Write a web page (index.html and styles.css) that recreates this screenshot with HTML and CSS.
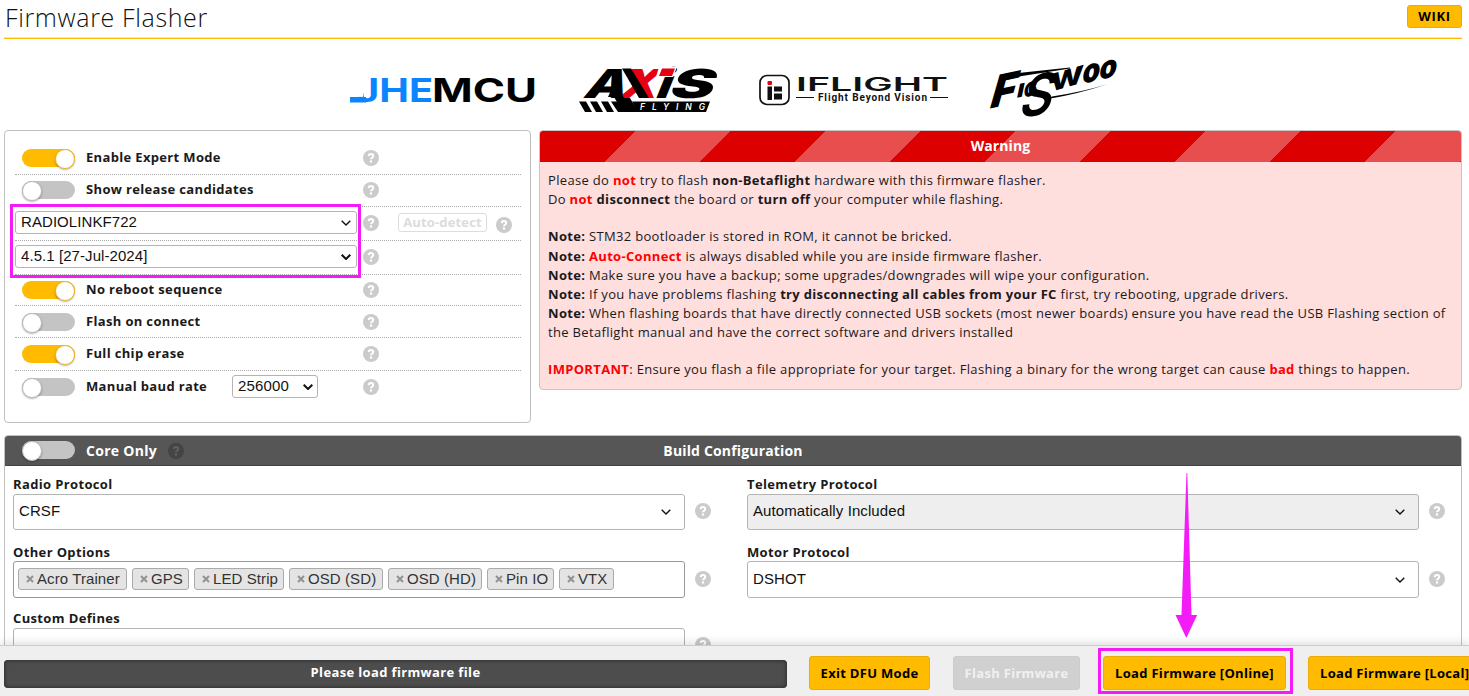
FILE: index.html
```html
<!DOCTYPE html>
<html lang="en">
<head>
<meta charset="utf-8">
<title>Firmware Flasher</title>
<link rel="stylesheet" href="styles.css">
</head>
<body>
<svg class="defs" width="0" height="0">
  <symbol id="help" viewBox="0 0 16 16"><circle cx="8" cy="8" r="8" fill="currentColor"/><path d="M5.7 6.1C5.8 3.4 10.2 3.4 10.2 6.1C10.2 7.7 8.1 7.7 8 9.3" fill="none" stroke="var(--mark)" stroke-width="2"/><rect x="6.9" y="10.4" width="2.2" height="2.2" fill="var(--mark)"/></symbol>
  <symbol id="chev" viewBox="0 0 10 6"><path d="M.7.7 5 5 9.3.7" fill="none" stroke="currentColor" stroke-width="var(--sw)"/></symbol>
  <symbol id="cross" viewBox="0 0 8 8"><path d="M1 1 7 7M7 1 1 7" fill="none" stroke="#929292" stroke-width="2"/></symbol>
</svg>

<header class="top">
  <h1>Firmware Flasher</h1>
  <a class="btn wiki">WIKI</a>
</header>

<div class="sponsors">
  <svg class="logo-jhemcu" width="190" height="40" viewBox="348 70 190 40">
    <path d="M350 97H366V102.500H350Z" fill="#0a84ff"/>
    <g font-family="Inter, sans-serif" font-weight="700" font-size="32"><text x="356" y="102" textLength="77" lengthAdjust="spacingAndGlyphs" fill="#0a84ff">JHE</text><text x="432" y="102" textLength="105" lengthAdjust="spacingAndGlyphs" fill="#000">MCU</text></g>
    <path d="M350 92H363V96.900H350Z" fill="#fff"/>
  </svg>
  <svg class="logo-axis" width="140" height="48" viewBox="578 66 140 48">
    <g transform="translate(0 98) skewX(-22)" font-family="Inter, sans-serif" font-weight="900" font-size="40"><text x="582" y="0" textLength="42" lengthAdjust="spacingAndGlyphs">A</text><text x="617" y="0" textLength="38" lengthAdjust="spacingAndGlyphs" fill="#e60012">X</text><text x="654" y="0" textLength="14" lengthAdjust="spacingAndGlyphs">i</text><text x="667" y="0" textLength="44" lengthAdjust="spacingAndGlyphs">S</text></g>
    <path d="M659 67H677L673 77H656Z" fill="#fff"/>
    <path d="M662 68.500H675L672 76H659Z" fill="#e60012"/>
    <path d="M622 68.500H631L649 98H639Z"/>
    <path d="M612 88H619L624 98H630L638 112H623L614 97H608Z"/>
    <path d="M579 101.500H586L592 112H585ZM590 101.500H597L603 112H596ZM601 101.500H608L614 112H607ZM611 101.500H620L627 112H618ZM632 101.500H710L706 112H637Z"/>
    <text x="640" y="110.300" textLength="65" font-family="Inter, sans-serif" font-style="italic" font-weight="600" font-size="8.500" fill="#fff">FLYING</text>
  </svg>
  <svg class="logo-iflight" width="192" height="36" viewBox="758 72 192 36">
    <rect x="760" y="75.500" width="29" height="29" rx="7" fill="#fff" stroke="#111" stroke-width="1.700"/>
    <rect x="767.500" y="81" width="4.500" height="4" rx="1" fill="#e60012"/>
    <path d="M767.500 86.500H772V100H767.500ZM774 86.500H782V91.500H774ZM774 93.500H782V99.500H774Z" fill="#111"/>
    <g fill="#111"><text x="796" y="91" textLength="152" lengthAdjust="spacingAndGlyphs" font-family="Inter, sans-serif" font-weight="600" font-size="18">IFLIGHT</text>
    <text x="818" y="101.300" textLength="109" font-family="Roboto, sans-serif" font-weight="700" font-size="10">Flight Beyond Vision</text>
    <path d="M796 97H814V98H796ZM930 97H948V98H930Z"/></g>
  </svg>
  <svg class="logo-figswoo" width="132" height="60" viewBox="988 60 132 60">
    <path d="M1000 75 1070 67.500V68.500L1022 76 1003 81Z"/>
    <g font-family="Inter, sans-serif" font-weight="900">
      <text transform="translate(988 109) rotate(-12) skewX(-28)" font-size="43" textLength="25" lengthAdjust="spacingAndGlyphs">F</text>
      <text transform="translate(1016 98) rotate(-12) skewX(-24)" font-size="18" textLength="7" lengthAdjust="spacingAndGlyphs">I</text>
      <text transform="translate(1023 98) rotate(-14) skewX(-22)" font-size="19" textLength="13" lengthAdjust="spacingAndGlyphs">G</text>
      <text transform="translate(1017 118) rotate(-8) skewX(-24)" font-size="56" font-weight="600" textLength="33" lengthAdjust="spacingAndGlyphs">S</text>
      <text transform="translate(1050 92) rotate(-16) skewX(-20)" font-size="31" font-weight="800" textLength="34" lengthAdjust="spacingAndGlyphs">w</text>
      <text transform="translate(1081 84) rotate(-12) skewX(-22)" font-size="32" textLength="18" lengthAdjust="spacingAndGlyphs">o</text>
      <text transform="translate(1098 80) rotate(-12) skewX(-22)" font-size="31" textLength="18" lengthAdjust="spacingAndGlyphs">o</text>
    </g>
    <path d="M1108 84Q1078 94 1048 99L1052 96.500Q1082 92 1108 84Z"/>
  </svg>
</div>

<div class="cols">
  <section class="panel options">
    <div class="row r1"><i class="toggle on"></i><b>Enable Expert Mode</b><svg class="help"><use href="#help"/></svg></div>
    <div class="row r2"><i class="toggle"></i><b>Show release candidates</b><svg class="help"><use href="#help"/></svg></div>
    <div class="row r3"><div class="sel wide"><span>RADIOLINKF722</span><svg class="chev thin"><use href="#chev"/></svg></div><svg class="help"><use href="#help"/></svg><span class="auto">Auto-detect</span><svg class="help second"><use href="#help"/></svg></div>
    <div class="row r4"><div class="sel wide"><span>4.5.1 [27-Jul-2024]</span><svg class="chev"><use href="#chev"/></svg></div><svg class="help"><use href="#help"/></svg></div>
    <div class="row r5"><i class="toggle on"></i><b>No reboot sequence</b><svg class="help"><use href="#help"/></svg></div>
    <div class="row r6"><i class="toggle"></i><b>Flash on connect</b><svg class="help"><use href="#help"/></svg></div>
    <div class="row r7"><i class="toggle on"></i><b>Full chip erase</b><svg class="help"><use href="#help"/></svg></div>
    <div class="row r8"><i class="toggle"></i><b class="baud">Manual baud rate</b><div class="sel small"><span>256000</span><svg class="chev"><use href="#chev"/></svg></div><svg class="help"><use href="#help"/></svg></div>
  </section>

  <section class="warning">
    <h2>Warning</h2>
    <div class="notes">
      <p>Please do <em>not</em> try to flash <strong>non-Betaflight</strong> hardware with this firmware flasher.</p>
      <p>Do <em>not</em> <strong>disconnect</strong> the board or <strong>turn off</strong> your computer while flashing.</p>
      <p class="gap"><strong>Note:</strong> STM32 bootloader is stored in ROM, it cannot be bricked.</p>
      <p><strong>Note:</strong> <em>Auto-Connect</em> is always disabled while you are inside firmware flasher.</p>
      <p><strong>Note:</strong> Make sure you have a backup; some upgrades/downgrades will wipe your configuration.</p>
      <p><strong>Note:</strong> If you have problems flashing <strong>try disconnecting all cables from your FC</strong> first, try rebooting, upgrade drivers.</p>
      <p><strong>Note:</strong> When flashing boards that have directly connected USB sockets (most newer boards) ensure you have read the USB Flashing section of<br>the Betaflight manual and have the correct software and drivers installed</p>
      <p class="gap2"><em>IMPORTANT</em>: Ensure you flash a file appropriate for your target. Flashing a binary for the wrong target can cause <em>bad</em> things to happen.</p>
    </div>
  </section>
</div>

<section class="build">
  <div class="build-head"><div class="core"><i class="toggle"></i><b>Core Only</b><svg class="help dark"><use href="#help"/></svg></div><h2>Build Configuration</h2></div>
  <div class="fields">
    <div class="field f1"><label>Radio Protocol</label><div class="line"><div class="sel big"><span>CRSF</span><svg class="chev thin"><use href="#chev"/></svg></div><svg class="help"><use href="#help"/></svg></div></div>
    <div class="field f1"><label>Telemetry Protocol</label><div class="line"><div class="sel big disabled"><span>Automatically Included</span><svg class="chev thin"><use href="#chev"/></svg></div><svg class="help"><use href="#help"/></svg></div></div>
    <div class="field f2"><label>Other Options</label><div class="line"><div class="sel big tags">
      <span class="tag w1"><svg><use href="#cross"/></svg>Acro Trainer</span><span class="tag w2"><svg><use href="#cross"/></svg>GPS</span><span class="tag w3"><svg><use href="#cross"/></svg>LED Strip</span><span class="tag w4"><svg><use href="#cross"/></svg>OSD (SD)</span><span class="tag w5"><svg><use href="#cross"/></svg>OSD (HD)</span><span class="tag w6"><svg><use href="#cross"/></svg>Pin IO</span><span class="tag w7"><svg><use href="#cross"/></svg>VTX</span>
    </div><svg class="help"><use href="#help"/></svg></div></div>
    <div class="field f2"><label>Motor Protocol</label><div class="line"><div class="sel big"><span>DSHOT</span><svg class="chev thin"><use href="#chev"/></svg></div><svg class="help"><use href="#help"/></svg></div></div>
    <div class="field f3"><label>Custom Defines</label><div class="line"><div class="sel big"></div><svg class="help"><use href="#help"/></svg></div></div>
  </div>
</section>

<footer class="bar">
  <div class="progress">Please load firmware file</div>
  <a class="btn exit">Exit DFU Mode</a>
  <a class="btn flash">Flash Firmware</a>
  <a class="btn online">Load Firmware [Online]</a>
  <a class="btn local">Load Firmware [Local]</a>
</footer>

<div class="mark mark-target"></div>
<div class="mark mark-online"></div>
<svg class="arrow" width="24" height="168" viewBox="0 0 24 168"><path d="M11.500 0H12.300L16.500 142H22.200L11.300 165 .5 142H6.500Z" fill="#f41cf6"/></svg>
</body>
</html>
```
FILE: styles.css
```css
* { box-sizing: border-box; }
body {
  margin: 0;
  width: 1469px;
  height: 696px;
  overflow: hidden;
  position: relative;
  background: #fff;
  font: 13px/19px "Open Sans", sans-serif;
  color: #1a1a1a;
  --mark: #fff;
  --sw: 2;
  display: flex;
  flex-direction: column;
}
h1, h2, p { margin: 0; }
.defs { position: absolute; }
.top {
  flex: none;
  height: 39px;
  margin: 0 7px 0 4px;
  border-bottom: 1px solid #ffbb00;
  box-shadow: inset 0 -1px #ffe6a0;
  display: flex;
  justify-content: space-between;
}
.top h1 { font-size: 25px; font-weight: 300; line-height: 34px; padding-left: 1px; letter-spacing: .640px; color: #111; white-space: nowrap; }
.btn {
  display: flex;
  align-items: center;
  justify-content: center;
  border: 1px solid #e8ad0c;
  border-radius: 3px;
  background: #ffbb00;
  color: #000;
  font-weight: 700;
  letter-spacing: .3px;
  white-space: nowrap;
}
.wiki { width: 55px; height: 23px; margin-top: 5px; letter-spacing: .7px; }
.sponsors { flex: none; height: 91px; display: flex; align-items: flex-start; }
.sponsors svg { flex: none; display: block; overflow: visible; }
.logo-jhemcu { margin: 31px 0 0 348px; }
.logo-axis { margin: 27px 0 0 40px; }
.logo-iflight { margin: 33px 0 0 40px; }
.logo-figswoo { margin: 21px 0 0 38px; }
.cols { flex: none; height: 305px; padding: 0 7px 0 4px; display: flex; gap: 8px; align-items: flex-start; }
.panel { width: 527px; height: 293px; border: 1px solid #c0c0c0; border-radius: 4px; padding: 11px 9px 0 10px; }
.row { display: flex; align-items: center; border-bottom: 1px dotted #aaa; }
.r1 { height: 33px; }
.r2 { height: 32px; padding-bottom: 1px; }
.r6 { height: 32px; }
.r3, .r4 { height: 34px; padding-bottom: 2px; }
.r5 { height: 31px; }
.r7 { height: 33px; }
.r8 { height: 32px; border: 0; }
.row b { width: 277px; margin-left: 11px; white-space: nowrap; margin-top: -2px; letter-spacing: .34px; }
.r2 b, .r6 b { margin-top: -1px; }
.row .baud { width: 146px; }
.toggle { flex: none; width: 53px; height: 18px; margin-left: 7px; border-radius: 9px; background: #c4c4c4; display: flex; }
.toggle::before { content: ""; width: 18px; height: 18px; border-radius: 50%; background: #fff; border: 1px solid #bbb; box-shadow: 0 1px 2px rgba(0,0,0,.3); }
.toggle.on { background: #ffbb00; justify-content: flex-end; }
.toggle.on::before { border-color: #eeb52b; }
.help { flex: none; width: 16px; height: 16px; color: #cbcbcb; }
.sel {
  flex: none;
  display: flex;
  align-items: center;
  justify-content: space-between;
  border: 1px solid #b4b4b4;
  border-radius: 3px;
  background: #fff;
  font: 15px/18px "Liberation Sans", Arial, sans-serif;
  color: #111;
}
.wide { width: 342px; height: 23px; padding: 0 5px 0 5px; margin-right: 6px; letter-spacing: .07px; }
.wide span { margin-top: -2px; }
.r4 .wide span { margin-top: -1px; }
.small { width: 86px; height: 23px; padding: 0 4px 0 5px; margin-right: 45px; margin-top: -1px; letter-spacing: .15px; }
.small span { margin-top: -1px; }
.chev { width: 10px; height: 6px; }
.chev.thin { --sw: 1.400; }
.auto { width: 89px; height: 19px; margin: 0 9px 0 19px; border: 1px solid #ddd; border-radius: 3px; color: #dcdcdc; font-weight: 700; line-height: 16px; text-align: center; letter-spacing: .15px; }
.second { margin-top: 4px; }
.warning { width: 923px; height: 260px; border: 1px solid #c6c6c6; border-radius: 4px; background: #ffdede; overflow: hidden; }
.warning h2 {
  height: 31px;
  color: #fff;
  font-size: 14px;
  line-height: 29px;
  letter-spacing: .1px;
  text-align: center;
  background: repeating-linear-gradient(135deg, #d00 0 67.200px, #e84e4e 67.200px 134.400px);
}
.notes { padding: 9px 8px 0; white-space: nowrap; letter-spacing: .325px; }
.notes p { line-height: 19.200px; }
.notes .gap { margin-top: 18px; }
.notes .gap2 { margin-top: 17.500px; }
.notes em { color: #f00; font-style: normal; font-weight: 700; }
.build { flex: none; width: 1458px; height: 261px; margin-left: 4px; border: 1px solid #c0c0c0; border-radius: 4px 4px 0 0; overflow: hidden; }
.build-head { height: 30px; background: #565656; border-bottom: 1px solid #444; color: #fff; display: grid; grid-template-columns: 1fr auto 1fr; align-items: center; }
.build-head h2 { font-size: 14px; line-height: 28px; letter-spacing: .16px; }
.core { display: flex; align-items: center; padding-left: 10px; font-size: 14px; letter-spacing: .3px; }
.core .toggle { margin-top: -2px; }
.core b { margin: 0 11px; }
.dark { color: #444; --mark: #606060; }
.fields { display: grid; grid-template-columns: 734px 1fr; padding-left: 8px; grid-template-rows: 67px 67px 67px; padding-top: 9px; }
.field label { display: block; font-weight: 700; height: 19px; line-height: 18px; letter-spacing: .36px; }
.line { display: flex; align-items: center; gap: 10px; }
.line .help { margin-top: -2px; }
.big { width: 672px; height: 36px; padding: 0 13px 0 5px; letter-spacing: .09px; }
.f2 .big { height: 37px; }
.f2 label { padding-top: 1px; }
.big span { margin-top: -2px; }
.f2 .big span { margin-top: -2px; }
.big.disabled { background: #eee; }
.big.tags { justify-content: flex-start; gap: 5px; padding: 0 0 0 4px; border-color: #999; }
.tag { display: flex; align-items: center; height: 22px; border: 1px solid #aaa; border-radius: 3px; background: #e4e4e4; padding-left: 7px; gap: 3px; color: #333; white-space: nowrap; line-height: 18px; flex: none; }
.tag svg { width: 8px; height: 8px; flex: none; }
.w1 { width: 109px; }
.w2 { width: 57px; }
.w3 { width: 90px; }
.w4 { width: 94px; }
.w5 { width: 94px; }
.w6 { width: 67px; }
.w7 { width: 55px; }
.bar {
  position: absolute;
  left: 0;
  top: 645px;
  width: 1469px;
  height: 51px;
  overflow: hidden;
  background: #efefef;
  border-top: 1px solid #ccc;
  box-shadow: 0 -1px 10px rgba(0,0,0,.16);
  display: flex;
  padding-left: 4px;
}
.progress { flex: none; width: 783px; height: 28px; margin-top: 14px; border-radius: 4px; background: #4d4d4d; box-shadow: inset 0 0 4px #222; color: #fff; font-weight: 700; text-align: center; line-height: 25px; letter-spacing: .36px; }
.bar .btn { flex: none; height: 34px; margin-top: 10px; }
.exit { width: 121px; margin-left: 22px; }
.bar .flash { width: 127px; margin-left: 23px; background: #d0d0d0; border-color: #ccc; color: #f0f0f0; }
.online { width: 183px; margin-left: 23px; }
.bar .local { width: 175px; margin-left: 22px; justify-content: flex-start; padding-left: 11px; }
.mark { position: absolute; border: 3px solid #f41cf6; }
.mark-target { left: 10px; top: 204px; width: 351px; height: 74px; }
.mark-online { left: 1098px; top: 648px; width: 195px; height: 46px; }
.arrow { position: absolute; left: 1175px; top: 473px; }
```
